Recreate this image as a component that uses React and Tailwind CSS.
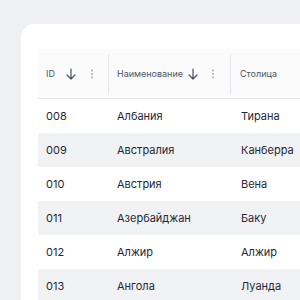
import React from 'react';

const rows = [
  ['008', 'Албания', 'Тирана'],
  ['009', 'Австралия', 'Канберра'],
  ['010', 'Австрия', 'Вена'],
  ['011', 'Азербайджан', 'Баку'],
  ['012', 'Алжир', 'Алжир'],
  ['013', 'Ангола', 'Луанда'],
];

function ArrowDown() {
  return (
    <svg width="12" height="12" viewBox="0 0 12 12" fill="none" stroke="#4b5563" strokeWidth="1.2" strokeLinecap="round" strokeLinejoin="round">
      <path d="M6 1v10M2 7l4 4 4-4" />
    </svg>
  );
}

function Dots() {
  return (
    <svg width="4" height="12" viewBox="0 0 4 12" fill="#9ca3af">
      <circle cx="2" cy="2.5" r="0.9" />
      <circle cx="2" cy="6" r="0.9" />
      <circle cx="2" cy="9.5" r="0.9" />
    </svg>
  );
}

export default function App() {
  return (
    <div className="w-[300px] h-[300px] overflow-hidden bg-[#eff0f3] pt-6 pl-[21px]" style={{ fontFamily: 'Inter, "Noto Sans", sans-serif' }}>
      <div className="w-[320px] h-[320px] bg-white rounded-tl-[14px] pl-[17px] pt-[25px]">
        {/* header */}
        <div className="flex h-[50px] bg-[#fbfbfc] border-b border-[#e6e7ea] text-[9px] text-[#4b5563]">
          <div className="w-[70px] flex items-center pl-2">
            <span>ID</span>
            <span className="ml-[10px]"><ArrowDown /></span>
            <span className="ml-[13px]"><Dots /></span>
          </div>
          <div className="w-px h-10 self-center bg-[#e5e7eb]" />
          <div className="w-[121px] flex items-center pl-2">
            <span>Наименование</span>
            <span className="ml-[4px]"><ArrowDown /></span>
            <span className="ml-[12px]"><Dots /></span>
          </div>
          <div className="w-px h-10 self-center bg-[#e5e7eb]" />
          <div className="flex-1 flex items-center pl-[9px]">
            <span>Столица</span>
          </div>
        </div>
        {/* body */}
        {rows.map((r, i) => (
          <div key={r[0]} className={`flex h-[34px] items-center text-[11px] text-[#1f2937] ${i % 2 ? 'bg-[#f1f2f4]' : 'bg-white'}`}>
            <div className="w-[71px] pl-2">{r[0]}</div>
            <div className="w-[122px] pl-2">{r[1]}</div>
            <div className="flex-1 pl-[10px]">{r[2]}</div>
          </div>
        ))}
      </div>
    </div>
  );
}
